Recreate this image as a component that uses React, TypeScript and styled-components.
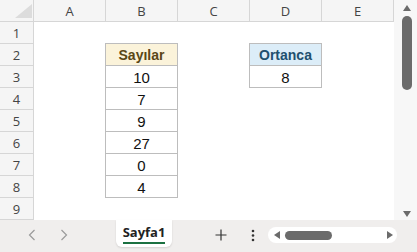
import React from 'react'
import styled, { createGlobalStyle } from 'styled-components'

const GlobalStyle = createGlobalStyle`
  html, body {
    margin: 0;
    padding: 0;
    background: #ffffff;
  }
  body {
    font-family: "Liberation Sans", Arial, sans-serif;
  }
`

const COLS = ['A', 'B', 'C', 'D', 'E']
const ROWS = [1, 2, 3, 4, 5, 6, 7, 8, 9]

type Cell = {
  col: number
  row: number
  text: string
  head?: 'sand' | 'sky'
}

const cells: Cell[] = [
  { col: 2, row: 2, text: 'Sayılar', head: 'sand' },
  { col: 2, row: 3, text: '10' },
  { col: 2, row: 4, text: '7' },
  { col: 2, row: 5, text: '9' },
  { col: 2, row: 6, text: '27' },
  { col: 2, row: 7, text: '0' },
  { col: 2, row: 8, text: '4' },
  { col: 4, row: 2, text: 'Ortanca', head: 'sky' },
  { col: 4, row: 3, text: '8' },
]

const headTheme = {
  sand: { bg: '#fbf3da', fg: '#5a4716' },
  sky: { bg: '#dcedf8', fg: '#21506f' },
}

const Frame = styled.div`
  width: 417px;
  height: 252px;
  display: flex;
  flex-direction: column;
  overflow: hidden;
  background: #ffffff;
`

const Workspace = styled.div`
  display: flex;
  height: 220px;
`

const Sheet = styled.div`
  display: grid;
  grid-template-columns: 34px repeat(5, 72px);
  grid-template-rows: 22px repeat(9, 22px);
  width: 394px;
`

const Corner = styled.div`
  grid-column: 1;
  grid-row: 1;
  background: #f5f5f5;
  border-right: 1px solid #d6d6d6;
  border-bottom: 1px solid #d6d6d6;
  display: flex;
  align-items: flex-end;
  justify-content: flex-end;
  padding: 0 1px 3px 0;
`

const ColHead = styled.div<{ $col: number }>`
  grid-column: ${p => p.$col + 1};
  grid-row: 1;
  background: #f5f5f5;
  border-right: 1px solid #d6d6d6;
  border-bottom: 1px solid #d6d6d6;
  display: flex;
  align-items: center;
  justify-content: center;
  font-family: "Open Sans", "Noto Sans", sans-serif;
  font-size: 13px;
  color: #444444;
`

const RowHead = styled.div<{ $row: number }>`
  grid-column: 1;
  grid-row: ${p => p.$row + 1};
  background: #f5f5f5;
  border-right: 1px solid #d6d6d6;
  border-bottom: 1px solid #d6d6d6;
  display: flex;
  align-items: center;
  justify-content: center;
  font-family: "Open Sans", "Noto Sans", sans-serif;
  font-size: 13px;
  color: #444444;
`

const DataCell = styled.div<{ $col: number; $row: number; $head?: 'sand' | 'sky' }>`
  grid-column: ${p => p.$col + 1};
  grid-row: ${p => p.$row + 1};
  background: ${p => (p.$head ? headTheme[p.$head].bg : '#ffffff')};
  color: ${p => (p.$head ? headTheme[p.$head].fg : '#111111')};
  font-weight: ${p => (p.$head ? 700 : 400)};
  font-size: ${p => (p.$head ? '14px' : '15px')};
  border-right: 1px solid #bdbdbd;
  border-bottom: 1px solid #bdbdbd;
  box-shadow: -1px 0 0 #bdbdbd, 0 -1px 0 #bdbdbd, -1px -1px 0 #bdbdbd;
  display: flex;
  align-items: center;
  justify-content: center;
  padding-top: 1px;
`

const VScroll = styled.div`
  width: 23px;
  background: #f7f7f7;
  display: flex;
  flex-direction: column;
  align-items: center;
  padding: 5px 0 3px 2px;
  box-sizing: border-box;
`

const VThumb = styled.div`
  width: 10px;
  height: 74px;
  margin-top: 5px;
  border-radius: 5px;
  background: #6b6b6b;
`

const Spacer = styled.div`
  flex: 1;
`

const TabBar = styled.div`
  height: 32px;
  background: #f0eeed;
  display: flex;
  align-items: flex-start;
`

const Nav = styled.div`
  width: 116px;
  height: 30px;
  display: flex;
  align-items: center;
  padding-left: 24px;
  gap: 16px;
  box-sizing: border-box;
`

const NavBtn = styled.div`
  width: 16px;
  display: flex;
  justify-content: center;
`

const SheetTab = styled.div`
  width: 56px;
  height: 27px;
  background: #ffffff;
  border-radius: 0 0 6px 6px;
  box-shadow: 0 1px 2px rgba(0, 0, 0, 0.12);
  display: flex;
  justify-content: center;
  padding-top: 4px;
  box-sizing: border-box;
`

const TabLabel = styled.span`
  font-family: "Open Sans", "Noto Sans", sans-serif;
  font-weight: 700;
  font-size: 13px;
  line-height: 16px;
  color: #222222;
  height: 17px;
  border-bottom: 2px solid #1b7141;
  padding-bottom: 1px;
`

const IconBtn = styled.div<{ $gap: number; $w: number }>`
  margin-left: ${p => p.$gap}px;
  width: ${p => p.$w}px;
  height: 30px;
  display: flex;
  align-items: center;
  justify-content: center;
`

const HScroll = styled.div`
  margin-left: 9px;
  margin-top: 7px;
  width: 129px;
  height: 16px;
  border-radius: 8px;
  background: #ffffff;
  display: flex;
  align-items: center;
  padding: 0 4px 0 6px;
  box-sizing: border-box;
`

const HThumb = styled.div`
  width: 47px;
  height: 9px;
  margin-left: 5px;
  border-radius: 5px;
  background: #6b6b6b;
`

const Tri = ({ dir, color = '#6b6b6b' }: { dir: 'up' | 'down' | 'left' | 'right'; color?: string }) => {
  const pts = {
    up: '4,0 8,6 0,6',
    down: '0,0 8,0 4,6',
    left: '6,0 6,8 0,4',
    right: '0,0 6,4 0,8',
  }[dir]
  const vertical = dir === 'up' || dir === 'down'
  return (
    <svg width={vertical ? 8 : 6} height={vertical ? 6 : 8} viewBox={vertical ? '0 0 8 6' : '0 0 6 8'}>
      <polygon points={pts} fill={color} />
    </svg>
  )
}

const Chevron = ({ left }: { left?: boolean }) => (
  <svg width="8" height="12" viewBox="0 0 8 12">
    <path d={left ? 'M6.5 1 L1.5 6 L6.5 11' : 'M1.5 1 L6.5 6 L1.5 11'} fill="none" stroke="#9a9a9a" strokeWidth="1.2" />
  </svg>
)

export default function App() {
  return (
    <Frame>
      <GlobalStyle />
      <Workspace>
        <Sheet>
          <Corner>
            <svg width="17" height="14" viewBox="0 0 17 14">
              <polygon points="17,0 17,14 0,14" fill="#dcdcdc" />
            </svg>
          </Corner>
          {COLS.map((c, i) => (
            <ColHead key={c} $col={i + 1}>{c}</ColHead>
          ))}
          {ROWS.map(r => (
            <RowHead key={r} $row={r}>{r}</RowHead>
          ))}
          {cells.map(c => (
            <DataCell key={`${c.col}-${c.row}`} $col={c.col} $row={c.row} $head={c.head}>
              {c.text}
            </DataCell>
          ))}
        </Sheet>
        <VScroll>
          <Tri dir="up" />
          <VThumb />
          <Spacer />
          <Tri dir="down" />
        </VScroll>
      </Workspace>
      <TabBar>
        <Nav>
          <NavBtn><Chevron left /></NavBtn>
          <NavBtn><Chevron /></NavBtn>
        </Nav>
        <SheetTab>
          <TabLabel>Sayfa1</TabLabel>
        </SheetTab>
        <IconBtn $gap={39} $w={20}>
          <svg width="12" height="12" viewBox="0 0 12 12">
            <path d="M6 0.5 V11.5 M0.5 6 H11.5" stroke="#333" strokeWidth="1.2" />
          </svg>
        </IconBtn>
        <IconBtn $gap={16} $w={12}>
          <svg width="4" height="13" viewBox="0 0 4 13">
            <circle cx="2" cy="2" r="1.3" fill="#333" />
            <circle cx="2" cy="6.5" r="1.3" fill="#333" />
            <circle cx="2" cy="11" r="1.3" fill="#333" />
          </svg>
        </IconBtn>
        <HScroll>
          <Tri dir="left" />
          <HThumb />
          <Spacer />
          <Tri dir="right" />
        </HScroll>
      </TabBar>
    </Frame>
  )
}
